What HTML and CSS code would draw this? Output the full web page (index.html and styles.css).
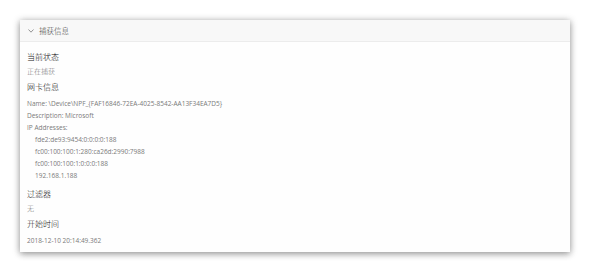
FILE: index.html
```html
<!DOCTYPE html>
<html lang="zh">
<head>
<meta charset="utf-8">
<link rel="stylesheet" href="styles.css">
</head>
<body>
<div class="card">
  <div class="card-header">
    <svg class="chevron" width="6" height="4" viewBox="0 0 6 4"><path d="M0.5 0.5 L3 3.2 L5.5 0.5" fill="none" stroke="#888" stroke-width="0.9"/></svg>
    <span class="header-title">捕获信息</span>
  </div>
  <div class="card-body">
    <div class="section">
      <div class="sec-title">当前状态</div>
      <div class="line cjk">正在捕获</div>
    </div>
    <div class="section section-latin">
      <div class="sec-title">网卡信息</div>
      <div class="line first">Name: \Device\NPF_{FAF16846-72EA-4025-8542-AA13F34EA7D5}</div>
      <div class="line">Description: Microsoft</div>
      <div class="line">IP Addresses:</div>
      <div class="line indent">fde2:de93:9454:0:0:0:0:188</div>
      <div class="line indent">fc00:100:100:1:280:ca26d:2990:7988</div>
      <div class="line indent">fc00:100:100:1:0:0:0:188</div>
      <div class="line indent">192.168.1.188</div>
    </div>
    <div class="section">
      <div class="sec-title">过滤器</div>
      <div class="line cjk">无</div>
    </div>
    <div class="section">
      <div class="sec-title">开始时间</div>
      <div class="line first date">2018-12-10 20:14:49.362</div>
    </div>
  </div>
</div>
</body>
</html>
```

FILE: styles.css
```css
html, body {
  margin: 0;
  padding: 0;
  background: #ffffff;
}
body {
  padding: 20px 19px 20px 20px;
  font-family: "Open Sans", "Noto Sans CJK SC", sans-serif;
}
.card {
  width: 550px;
  height: 232px;
  background: #fefefe;
  box-shadow: 0 1px 7px rgba(0, 0, 0, 0.38), 0 3px 6px rgba(0, 0, 0, 0.12);
  display: flex;
  flex-direction: column;
}
.card-header {
  height: 21px;
  background: #f8f8f8;
  border-bottom: 1px solid #ececec;
  display: flex;
  align-items: center;
  padding-left: 8px;
  gap: 3px;
}
.chevron {
  display: block;
  margin-right: 2px;
}
.header-title {
  font-family: "Noto Sans CJK SC", sans-serif;
  font-weight: 300;
  font-size: 7.5px;
  color: #444;
  line-height: 10px;
}
.card-body {
  padding: 7px 7px 0 7px;
  display: flex;
  flex-direction: column;
}
.sec-title {
  font-family: "Noto Sans CJK SC", sans-serif;
  font-weight: 300;
  font-size: 8px;
  color: #111;
  line-height: 15px;
}
.line {
  font-size: 6.5px;
  color: #7a7a7a;
  line-height: 12px;
  white-space: nowrap;
}
.line.cjk {
  font-family: "Noto Sans CJK SC", sans-serif;
  font-weight: 300;
  font-size: 7px;
  color: #777;
  line-height: 14px;
}
.line.first {
  margin-top: 4px;
}
.line.date {
  margin-top: 4px;
}
.indent {
  padding-left: 8px;
}
.section + .section {
  margin-top: 1px;
}
.section-latin {
  padding-bottom: 3px;
}
```
